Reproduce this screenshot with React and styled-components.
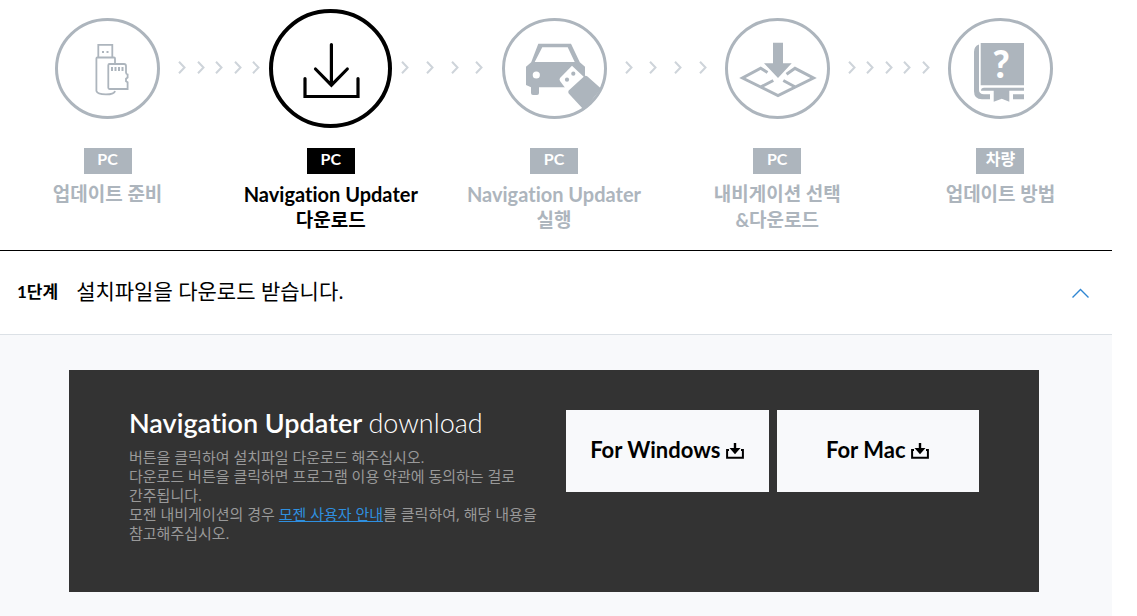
import React, { useState } from "react";
import styled, { createGlobalStyle } from "styled-components";

const GlobalStyle = createGlobalStyle`
  * {
    box-sizing: border-box;
  }

  body {
    margin: 0;
    background: #fff;
    color: #000;
    font-family: Lato, "Noto Sans CJK KR", sans-serif;
    font-variant-ligatures: none;
    word-break: keep-all;
  }

  button {
    font-family: inherit;
    color: inherit;
    border: 0;
    cursor: pointer;
  }
`;

const Page = styled.main`
  margin-right: 25px;
`;

const StepList = styled.ol`
  display: flex;
  list-style: none;
  margin: 0 0 0 -4px;
  padding: 9px 0 17px;
`;

const Step = styled.li`
  flex: 1 1 0;
  display: flex;
  flex-direction: column;
  align-items: center;
  color: ${({ $active }) => ($active ? "#000" : "#adb5bd")};
`;

const StepIcon = styled.div`
  height: 119px;
  display: flex;
  align-items: center;

  svg {
    display: block;
  }
`;

const Device = styled.span`
  width: 48px;
  height: 26px;
  margin-top: 20px;
  background: currentColor;
  text-align: center;

  span {
    display: block;
    color: #fff;
    font-size: 16px;
    font-weight: 700;
    line-height: 22px;
  }
`;

const StepTitle = styled.strong`
  margin-top: 7px;
  text-align: center;
`;

const TitleLine = styled.span`
  display: block;
  font-size: ${({ $latin }) => ($latin ? "20px" : "19px")};
  font-weight: 700;
  line-height: 26px;
`;

const Arrows = styled.li`
  flex: 0 0 82px;
  height: 119px;
  margin: 0 -41px;
  display: flex;
  align-items: center;
  justify-content: space-between;
`;

const AccordionHeader = styled.button`
  width: 100%;
  min-height: 85px;
  padding: 0 23px 5px 17px;
  display: flex;
  align-items: center;
  gap: 18px;
  background: #fff;
  border-top: 1px solid #000;
  border-bottom: 1px solid #dce1e6;
  text-align: left;

  svg {
    margin: 5px 0 0 auto;
    transform: ${({ $open }) => ($open ? "none" : "rotate(180deg)")};
  }
`;

const StageNo = styled.span`
  font-size: 17px;
  font-weight: 700;
`;

const StageTitle = styled.span`
  font-family: "Open Sans", "Noto Sans CJK KR", sans-serif;
  font-size: 21px;
`;

const AccordionPanel = styled.section`
  padding: 35px 73px 35px 69px;
  background: #f8f9fb;
`;

const DownloadBox = styled.div`
  display: flex;
  align-items: flex-start;
  gap: 20px;
  padding: 40px 60px 49px;
  background: #333;
`;

const DownloadText = styled.div`
  flex: 1 1 0;
`;

const DownloadTitle = styled.h2`
  margin: 0;
  color: #fff;
  font-size: 27px;
  font-weight: 600;
  line-height: 25px;

  span {
    font-weight: 300;
  }
`;

const Description = styled.p`
  margin: 13px 0 0;
  color: #999;
  font-family: "Open Sans", "Noto Sans CJK KR", sans-serif;
  font-size: 15px;
  line-height: 19px;
`;

const GuideLink = styled.a`
  color: #2f8fdf;
  text-decoration: underline;
`;

const Buttons = styled.div`
  flex: 0 0 413px;
  display: flex;
  gap: 8px;
`;

const DownloadButton = styled.button`
  flex: 1 1 0;
  height: 82px;
  padding: 0 0 4px;
  display: flex;
  align-items: center;
  justify-content: center;
  gap: 6px;
  background: #f8f9fb;
  font-size: 22px;
  font-weight: 700;

  svg {
    margin-top: 4px;
  }
`;

function Ring({ children }) {
  return (
    <svg width="105" height="101" viewBox="0 0 105 101" fill="none" aria-hidden="true">
      {children}
      <ellipse cx="52.5" cy="50.5" rx="51" ry="49" stroke="currentColor" strokeWidth="3" />
    </svg>
  );
}

function UsbIcon() {
  return (
    <Ring>
      <g stroke="currentColor" strokeWidth="1.8">
        <path d="M43.3 39V26.8h14V39" />
        <path d="M60 45v-4.5q0-1-1-1H42.400q-1 0-1 1V73q1 3.400 9.500 3.400T60 73" />
        <path
          d="M54.500 46h14.500q2 0 2 2v6.500q0 1.500 1.600 2v3l-1.600 1.200v2.500l1.600 1V71H54.500q-1.200 0-1.200-1.200V47.200q0-1.200 1.200-1.200z"
          fill="#fff"
        />
      </g>
      <path
        d="M47 33h2v2h-2zM51.500 33h2v2h-2zM56 49h2v4h-2zM59.500 49h2v4h-2zM63 49h2v4h-2zM66.500 49h2v4h-2z"
        fill="currentColor"
      />
    </Ring>
  );
}

function DownloadIcon() {
  return (
    <svg width="123" height="119" viewBox="0 0 123 119" fill="none" stroke="currentColor" aria-hidden="true">
      <ellipse cx="61.5" cy="59.5" rx="59.5" ry="57.5" strokeWidth="4" />
      <path
        d="M62.400 35.500v40.500M46.500 60l15.900 16.200L78.300 60M36 69.500v18h53v-18"
        strokeWidth="3.2"
        strokeLinecap="round"
      />
    </svg>
  );
}

function CarIcon() {
  return (
    <Ring>
      <path
        fillRule="evenodd"
        d="M36.300 25.700H69l8.800 18.600 5.200 4.400v20.600H37V75q0 2-2 2h-4q-2 0-2-2v-5.700l-5-2.300V48.700l5.200-4.400zM40.300 29.300L32.700 44h40l-7-14.700z"
        fill="currentColor"
      />
      <circle cx="34.3" cy="57" r="3.6" fill="#fff" />
      <path d="M70 47.700L83 60v10L67 75 58 63q-1-1.500 0-3z" fill="#fff" />
      <path d="M82 58.500q1.500-1.500 3.500 0L99 70.500 82 92 66.700 75.500q-1-1.500 0-3z" fill="currentColor" />
      <circle cx="71.300" cy="55.700" r="2.100" fill="currentColor" />
      <circle cx="65" cy="61.700" r="2.100" fill="currentColor" />
    </Ring>
  );
}

function MapIcon() {
  return (
    <Ring>
      <path d="M48 24.700h10v20.600h8.700L53 60 39 45.300h9z" fill="currentColor" />
      <path
        d="M42.500 54.500l-6.800-4.200L17.500 60 53 77.600 88.500 60 70 50.300l-8.500 6M35.700 69l12.600-6.500M70.300 69l-12-6.500"
        stroke="currentColor"
        strokeWidth="3"
      />
    </Ring>
  );
}

const BookMark = styled.text`
  font: 900 37px Lato, sans-serif;
  fill: #fff;
  text-anchor: middle;
`;

function BookIcon() {
  return (
    <Ring>
      <path
        d="M32.700 25H76v42.300H32.700zM31 26.500V71q-.5 5.300 5 5.300h6v5H34q-8 0-8-8V34q0-6 5-7.500zM36 69.700h40v3H61.300v11l-7.500-3-8.100 3v-11H33q0-3 3-3zM65 76.300h11v5H65z"
        fill="currentColor"
      />
      <BookMark x="53" y="60">?</BookMark>
    </Ring>
  );
}

function ArrowRow({ count }) {
  return (
    <Arrows aria-hidden="true">
      {Array.from({ length: count }, (_, i) => (
        <svg key={i} width="8" height="15" viewBox="0 0 8 15" fill="none">
          <path d="M1 .8l5.500 5.700L1 12.200" stroke="#ced4da" strokeWidth="2" />
        </svg>
      ))}
    </Arrows>
  );
}

function TrayIcon() {
  return (
    <svg width="18" height="16" viewBox="0 0 18 16" fill="none" aria-hidden="true">
      <path d="M3 7H1.100V14.700H16.900V7H15" stroke="#000" strokeWidth="2" />
      <path d="M7.800 0h2.400v5h4.300L9 11.300 3.500 5h4.300z" fill="#000" />
    </svg>
  );
}

const steps = [
  { icon: UsbIcon, device: "PC", lines: [{ text: "업데이트 준비" }], arrows: 5 },
  {
    icon: DownloadIcon,
    device: "PC",
    lines: [{ text: "Navigation Updater", latin: true }, { text: "다운로드" }],
    active: true,
    arrows: 4,
  },
  {
    icon: CarIcon,
    device: "PC",
    lines: [{ text: "Navigation Updater", latin: true }, { text: "실행" }],
    arrows: 4,
  },
  { icon: MapIcon, device: "PC", lines: [{ text: "내비게이션 선택" }, { text: "&다운로드" }], arrows: 5 },
  { icon: BookIcon, device: "차량", lines: [{ text: "업데이트 방법" }] },
];

function App() {
  const [open, setOpen] = useState(true);

  return (
    <Page>
      <GlobalStyle />
      <StepList>
        {steps.map(({ icon: Icon, device, lines, active, arrows }, index) => (
          <React.Fragment key={index}>
            <Step $active={active} aria-current={active ? "step" : undefined}>
              <StepIcon>
                <Icon />
              </StepIcon>
              <Device>
                <span>{device}</span>
              </Device>
              <StepTitle>
                {lines.map(({ text, latin }) => (
                  <TitleLine key={text} $latin={latin}>
                    {text}
                  </TitleLine>
                ))}
              </StepTitle>
            </Step>
            {arrows && <ArrowRow count={arrows} />}
          </React.Fragment>
        ))}
      </StepList>

      <AccordionHeader type="button" $open={open} aria-expanded={open} onClick={() => setOpen(!open)}>
        <StageNo>1단계</StageNo>
        <StageTitle>설치파일을 다운로드 받습니다.</StageTitle>
        <svg width="17" height="10" viewBox="0 0 17 10" fill="none" aria-hidden="true">
          <path d="M.5 9.500L8.500 1.500l8 8" stroke="#2f86d2" strokeWidth="1.4" />
        </svg>
      </AccordionHeader>

      {open && (
        <AccordionPanel>
          <DownloadBox>
            <DownloadText>
              <DownloadTitle>
                Navigation Updater <span>download</span>
              </DownloadTitle>
              <Description>
                버튼을 클릭하여 설치파일 다운로드 해주십시오.
                <br />
                다운로드 버튼을 클릭하면 프로그램 이용 약관에 동의하는 걸로 간주됩니다.
                <br />
                모젠 내비게이션의 경우 <GuideLink href="#guide">모젠 사용자 안내</GuideLink>를 클릭하여, 해당 내용을
                참고해주십시오.
              </Description>
            </DownloadText>
            <Buttons>
              <DownloadButton type="button">
                For Windows <TrayIcon />
              </DownloadButton>
              <DownloadButton type="button">
                For Mac <TrayIcon />
              </DownloadButton>
            </Buttons>
          </DownloadBox>
        </AccordionPanel>
      )}
    </Page>
  );
}

export default App;
